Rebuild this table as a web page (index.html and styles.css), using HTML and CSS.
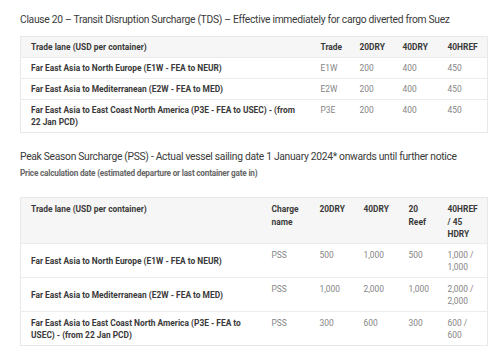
FILE: index.html
```html
<!DOCTYPE html>
<html lang="en">
<head>
<meta charset="utf-8">
<title>Surcharges</title>
<link rel="stylesheet" href="styles.css">
</head>
<body>
<div class="page">
  <h2 class="title">Clause 20 – Transit Disruption Surcharge (TDS) – Effective immediately for cargo diverted from Suez</h2>
  <table class="rates t1">
    <colgroup>
      <col class="c-lane1"><col class="c-trade"><col class="c-20"><col class="c-40"><col class="c-40h">
    </colgroup>
    <thead>
      <tr><th>Trade lane (USD per container)</th><th>Trade</th><th>20DRY</th><th>40DRY</th><th>40HREF</th></tr>
    </thead>
    <tbody>
      <tr><td class="lane">Far East Asia to North Europe (E1W - FEA to NEUR)</td><td>E1W</td><td>200</td><td>400</td><td>450</td></tr>
      <tr><td class="lane">Far East Asia to Mediterranean (E2W - FEA to MED)</td><td>E2W</td><td>200</td><td>400</td><td>450</td></tr>
      <tr><td class="lane">Far East Asia to East Coast North America (P3E - FEA to USEC) - (from 22 Jan PCD)</td><td>P3E</td><td>200</td><td>400</td><td>450</td></tr>
    </tbody>
  </table>

  <h2 class="title title2">Peak Season Surcharge (PSS) - Actual vessel sailing date 1 January 2024* onwards until further notice</h2>
  <p class="subtitle">Price calculation date (estimated departure or last container gate in)</p>
  <table class="rates t2">
    <colgroup>
      <col class="c-lane2"><col class="c-charge"><col class="c-20b"><col class="c-40b"><col class="c-reef"><col class="c-40h">
    </colgroup>
    <thead>
      <tr><th>Trade lane (USD per container)</th><th>Charge name</th><th>20DRY</th><th>40DRY</th><th>20 Reef</th><th>40HREF / 45 HDRY</th></tr>
    </thead>
    <tbody>
      <tr><td class="lane">Far East Asia to North Europe (E1W - FEA to NEUR)</td><td>PSS</td><td>500</td><td>1,000</td><td>500</td><td>1,000 / 1,000</td></tr>
      <tr><td class="lane">Far East Asia to Mediterranean (E2W - FEA to MED)</td><td>PSS</td><td>1,000</td><td>2,000</td><td>1,000</td><td>2,000 / 2,000</td></tr>
      <tr><td class="lane">Far East Asia to East Coast North America (P3E - FEA to USEC) - (from 22 Jan PCD)</td><td>PSS</td><td>300</td><td>600</td><td>300</td><td>600 / 600</td></tr>
    </tbody>
  </table>
</div>
</body>
</html>
```

FILE: styles.css
```css
html, body {
  margin: 0;
  padding: 0;
  background: #ffffff;
}

body {
  font-family: Roboto, "Liberation Sans", sans-serif;
  color: #333333;
}

.page {
  padding: 13px 14px 0 20px;
}

.title {
  margin: 0 0 9px;
  font-size: 10.3px;
  line-height: 14px;
  font-weight: 400;
  letter-spacing: -0.3px;
  color: #3a3a3a;
  white-space: nowrap;
}

.title2 {
  margin: 17px 0 3px;
}

.subtitle {
  margin: 0 0 18px;
  font-size: 8.2px;
  line-height: 12px;
  font-weight: 700;
  letter-spacing: -0.2px;
  color: #666666;
  white-space: nowrap;
}

.rates {
  width: 467px;
  table-layout: fixed;
  border-collapse: collapse;
  border: 1px solid #e8e8e8;
  font-size: 8.4px;
  letter-spacing: 0;
}

.rates th {
  background: #f6f6f6;
  font-weight: 700;
  color: #3a3a3a;
  text-align: left;
  vertical-align: top;
}

.rates td {
  color: #858585;
  text-align: left;
  vertical-align: top;
  border-top: 1px solid #ececec;
}

.rates td.lane {
  font-weight: 700;
  color: #3a3a3a;
}

.t1 th, .t1 td {
  padding: 4px 4px 4px 10px;
  line-height: 12px;
}

.t2 th {
  padding: 5px 6px 2px 10px;
  line-height: 12.5px;
}

.t2 td {
  padding: 5px 6px 3px 10px;
  line-height: 12.5px;
}

.t2 td.lane {
  vertical-align: middle;
  padding-right: 8px;
}

.c-lane1 { width: 290px; }
.c-trade { width: 39px; }
.c-20 { width: 43px; }
.c-40 { width: 45px; }
.c-40h { width: 50px; }

.c-lane2 { width: 241px; }
.c-charge { width: 48px; }
.c-20b { width: 44px; }
.c-40b { width: 45px; }
.c-reef { width: 39px; }
```
